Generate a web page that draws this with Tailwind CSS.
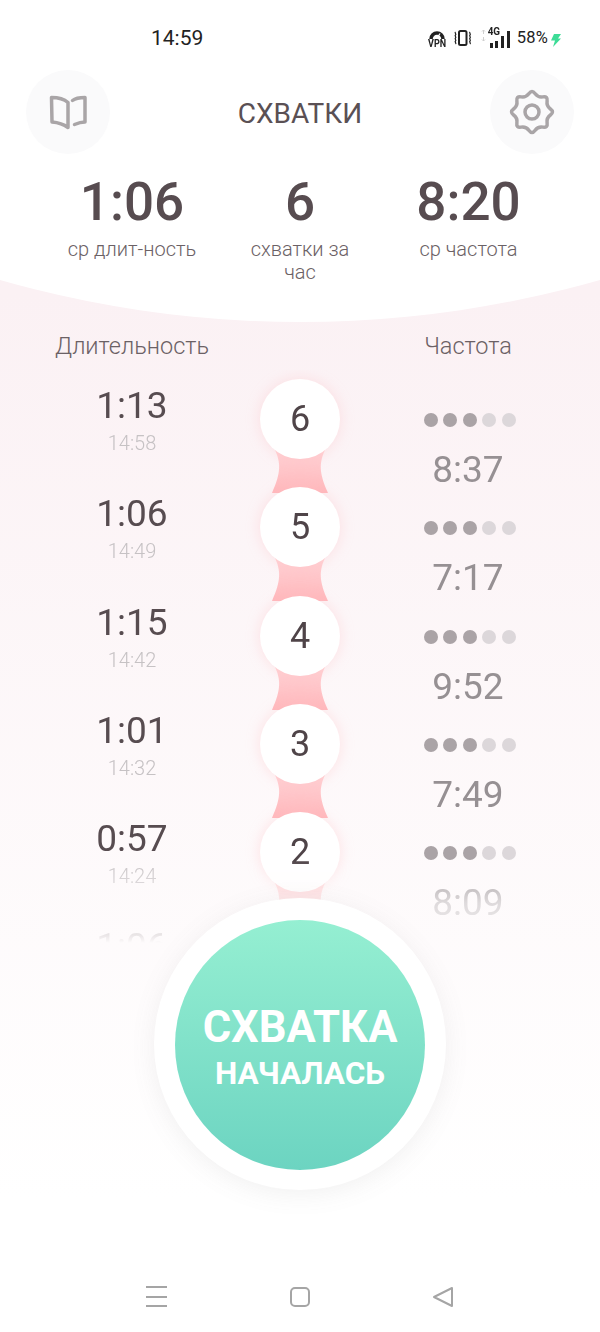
<!DOCTYPE html>
<html lang="ru">
<head>
<meta charset="utf-8">
<script src="https://cdn.jsdelivr.net/npm/@tailwindcss/browser@4"></script>
<title>Схватки</title>
</head>
<body class="m-0 bg-white">
<div class="relative w-[600px] h-[1332px] overflow-hidden font-['Roboto',sans-serif] text-[#574c50] bg-linear-to-b from-[#fbf1f4] from-[22%] to-white to-[90%]">
  <!-- curved white top -->
  <div class="absolute left-[-792px] top-[-1862px] w-[2184px] h-[2184px] rounded-full bg-white"></div>

  <div class="relative flex flex-col h-full">
    <!-- status bar -->
    <div class="h-[70px] flex items-start shrink-0 pt-[26px] pl-[151px] pr-[39px] justify-between">
      <span class="text-[21px] leading-[24px] text-[#222]">14:59</span>
      <div class="flex items-center h-[24px] text-[#222]">
        <div class="flex flex-col items-center w-[18px] mt-[2px]">
          <svg width="16" height="9" viewBox="0 0 16 9" fill="none"><path d="M2 9a6 6 0 0 1 12 0" stroke="#222" stroke-width="3.500"/><path d="M7.500 9 11 3.500" stroke="#fff" stroke-width="1.200"/></svg>
          <span class="text-[10px] leading-[9px] font-bold scale-x-90">VPN</span>
        </div>
        <svg class="ml-[7px]" width="19" height="16" viewBox="0 0 19 16" fill="none" stroke="#222"><rect x="6" y="1" width="7.500" height="14" rx="1.500" stroke-width="2"/><path d="M2.500 2c-1.200 1 1.200 2 0 3s1.200 2 0 3 1.200 2 0 3 1.200 2 0 3" stroke-width="1.300"/><path d="M17 2c-1.200 1 1.200 2 0 3s1.200 2 0 3 1.200 2 0 3 1.200 2 0 3" stroke-width="1.300"/></svg>
        <svg class="ml-[9px] -mt-[6px]" width="5" height="13" viewBox="0 0 5 13" fill="none" stroke="#cfcfcf" stroke-width="1"><path d="M2.500 5V1M1 2.500 2.500 1 4 2.500M2.500 8v4M1 10.500 2.500 12 4 10.500"/></svg>
        <div class="flex items-end gap-[2px] h-[20px] ml-[4px] relative">
          <span class="absolute left-[-3px] top-[-2px] text-[11px] leading-[11px] font-bold scale-x-90">4G</span>
          <i class="block w-[3px] h-[5px] bg-[#222]"></i><i class="block w-[3px] h-[7px] bg-[#222]"></i><i class="block w-[3px] h-[12px] bg-[#222] ml-[1px]"></i><i class="block w-[3px] h-[17px] bg-[#222] ml-[1px]"></i>
        </div>
        <div class="flex items-center ml-[7px]">
          <span class="text-[16.500px] leading-[20px] tracking-[0.2px]">58%</span>
          <svg class="ml-[2px] mt-[3px]" width="11" height="14" viewBox="0 0 11 14"><path d="M4 1h7L8 5.500h3L3 14l2-6.500H1z" fill="#3ddc97"/></svg>
        </div>
      </div>
    </div>

    <!-- header -->
    <div class="h-[84px] shrink-0 flex items-center justify-between pl-[26px] pr-[26px]">
      <div class="w-[84px] h-[84px] rounded-full bg-[#fafafb] flex items-center justify-center">
        <svg width="38" height="35" viewBox="0 0 38 35" fill="none" stroke="#a9a5a7" stroke-width="3.500" stroke-linejoin="round" stroke-linecap="round"><path d="M2.500 2.500C8 2.500 15 4 19 7.500V32.500C15 29.500 9 27.500 3 27Z"/><path d="M23.500 5.500C26 3.500 31 2.500 36 2.500V27C32 27 29 28 25.500 29.500"/></svg>
      </div>
      <h1 class="text-[28px] leading-[34px] font-normal text-[#5a5054] mt-[3px]">СХВАТКИ</h1>
      <div class="w-[84px] h-[84px] rounded-full bg-[#fafafb] flex items-center justify-center">
        <svg class="overflow-visible" width="44" height="44" viewBox="0 0 44 44" fill="none" stroke="#a9a5a7" stroke-width="3.500"><path d="M19.030 3.590Q22 -.5 24.970 3.590Q27.930 7.680 32.920 6.890Q37.900 6.100 37.110 11.090Q36.320 16.070 40.410 19.040Q44.500 22 40.410 24.970Q36.320 27.930 37.110 32.920Q37.900 37.900 32.920 37.110Q27.930 36.320 24.970 40.410Q22 44.500 19.030 40.410Q16.070 36.320 11.080 37.110Q6.100 37.900 6.890 32.920Q7.680 27.930 3.590 24.970Q-.5 22 3.590 19.030Q7.680 16.070 6.890 11.080Q6.100 6.100 11.080 6.890Q16.070 7.680 19.030 3.590Z"/><circle cx="22" cy="22" r="7"/></svg>
      </div>
    </div>

    <!-- stats -->
    <div class="h-[176px] shrink-0 pl-[32px] pr-[31px] pt-[18px] grid grid-cols-[200px_136px_201px] items-start text-center">
      <div>
        <div class="text-[53px] leading-[60px] font-medium">1:06</div>
        <div class="text-[20px] leading-[23px] font-light mt-[6px] text-[#6b6165]">ср длит-ность</div>
      </div>
      <div>
        <div class="text-[53px] leading-[60px] font-medium">6</div>
        <div class="text-[20px] leading-[23px] font-light mt-[6px] text-[#6b6165] w-[120px] mx-auto">схватки за час</div>
      </div>
      <div>
        <div class="text-[53px] leading-[60px] font-medium">8:20</div>
        <div class="text-[20px] leading-[23px] font-light mt-[6px] text-[#6b6165]">ср частота</div>
      </div>
    </div>

    <!-- column headers -->
    <div class="h-[40px] shrink-0 flex text-[23.500px] font-light text-[#6b6165] leading-[32px]">
      <div class="w-[264px] text-center">Длительность</div>
      <div class="w-[72px]"></div>
      <div class="w-[264px] text-center">Частота</div>
    </div>

    <!-- list -->
    <div class="h-[580px] shrink-0 overflow-hidden [mask-image:linear-gradient(to_bottom,black_0,black_490px,rgba(0,0,0,.3)_533px,rgba(0,0,0,.12)_565px,transparent_573px)]">
      <div class="h-[108.300px] flex">
        <div class="w-[264px] text-center">
          <div class="text-[37px] leading-[40px] font-normal mt-[16px]">1:13</div>
          <div class="text-[20px] leading-[24px] font-light text-[#c6c2c4] mt-[5px]">14:58</div>
        </div>
        <div class="w-[72px] relative flex justify-center">
          <svg class="absolute left-[4px] top-[75px]" width="64" height="60" viewBox="0 0 64 60"><defs><linearGradient id="p" x1="0" y1="0" x2="0" y2="1"><stop offset="0" stop-color="#ffd2d5"/><stop offset="1" stop-color="#ffb7bb"/></linearGradient></defs><path d="M7 5C13 18 13 28 4 48L60 48C51 28 51 18 57 5Z" fill="url(#p)"/></svg>
          <div class="relative shrink-0 w-[80px] h-[80px] mt-[9px] rounded-full bg-white shadow-[0_0_14px_rgba(255,190,195,0.4)] flex items-center justify-center text-[36px] font-normal text-[#4f4448]">6</div>
        </div>
        <div class="w-[264px] flex flex-col items-center">
          <div class="flex gap-[5.500px] mt-[43px] ml-[3px]"><i class="block w-[14px] h-[14px] rounded-full bg-[#aaa3a6]"></i><i class="block w-[14px] h-[14px] rounded-full bg-[#aaa3a6]"></i><i class="block w-[14px] h-[14px] rounded-full bg-[#aaa3a6]"></i><i class="block w-[14px] h-[14px] rounded-full bg-[#dcd7da]"></i><i class="block w-[14px] h-[14px] rounded-full bg-[#dcd7da]"></i></div>
          <div class="text-[37px] leading-[40px] font-normal text-[#969093] mt-[23px]">8:37</div>
        </div>
      </div>
      <div class="h-[108.300px] flex">
        <div class="w-[264px] text-center">
          <div class="text-[37px] leading-[40px] font-normal mt-[16px]">1:06</div>
          <div class="text-[20px] leading-[24px] font-light text-[#c6c2c4] mt-[5px]">14:49</div>
        </div>
        <div class="w-[72px] relative flex justify-center">
          <svg class="absolute left-[4px] top-[75px]" width="64" height="60" viewBox="0 0 64 60"><path d="M7 5C13 18 13 28 4 48L60 48C51 28 51 18 57 5Z" fill="url(#p)"/></svg>
          <div class="relative shrink-0 w-[80px] h-[80px] mt-[9px] rounded-full bg-white shadow-[0_0_14px_rgba(255,190,195,0.4)] flex items-center justify-center text-[36px] font-normal text-[#4f4448]">5</div>
        </div>
        <div class="w-[264px] flex flex-col items-center">
          <div class="flex gap-[5.500px] mt-[43px] ml-[3px]"><i class="block w-[14px] h-[14px] rounded-full bg-[#aaa3a6]"></i><i class="block w-[14px] h-[14px] rounded-full bg-[#aaa3a6]"></i><i class="block w-[14px] h-[14px] rounded-full bg-[#aaa3a6]"></i><i class="block w-[14px] h-[14px] rounded-full bg-[#dcd7da]"></i><i class="block w-[14px] h-[14px] rounded-full bg-[#dcd7da]"></i></div>
          <div class="text-[37px] leading-[40px] font-normal text-[#969093] mt-[23px]">7:17</div>
        </div>
      </div>
      <div class="h-[108.300px] flex">
        <div class="w-[264px] text-center">
          <div class="text-[37px] leading-[40px] font-normal mt-[16px]">1:15</div>
          <div class="text-[20px] leading-[24px] font-light text-[#c6c2c4] mt-[5px]">14:42</div>
        </div>
        <div class="w-[72px] relative flex justify-center">
          <svg class="absolute left-[4px] top-[75px]" width="64" height="60" viewBox="0 0 64 60"><path d="M7 5C13 18 13 28 4 48L60 48C51 28 51 18 57 5Z" fill="url(#p)"/></svg>
          <div class="relative shrink-0 w-[80px] h-[80px] mt-[9px] rounded-full bg-white shadow-[0_0_14px_rgba(255,190,195,0.4)] flex items-center justify-center text-[36px] font-normal text-[#4f4448]">4</div>
        </div>
        <div class="w-[264px] flex flex-col items-center">
          <div class="flex gap-[5.500px] mt-[43px] ml-[3px]"><i class="block w-[14px] h-[14px] rounded-full bg-[#aaa3a6]"></i><i class="block w-[14px] h-[14px] rounded-full bg-[#aaa3a6]"></i><i class="block w-[14px] h-[14px] rounded-full bg-[#aaa3a6]"></i><i class="block w-[14px] h-[14px] rounded-full bg-[#dcd7da]"></i><i class="block w-[14px] h-[14px] rounded-full bg-[#dcd7da]"></i></div>
          <div class="text-[37px] leading-[40px] font-normal text-[#969093] mt-[23px]">9:52</div>
        </div>
      </div>
      <div class="h-[108.300px] flex">
        <div class="w-[264px] text-center">
          <div class="text-[37px] leading-[40px] font-normal mt-[16px]">1:01</div>
          <div class="text-[20px] leading-[24px] font-light text-[#c6c2c4] mt-[5px]">14:32</div>
        </div>
        <div class="w-[72px] relative flex justify-center">
          <svg class="absolute left-[4px] top-[75px]" width="64" height="60" viewBox="0 0 64 60"><path d="M7 5C13 18 13 28 4 48L60 48C51 28 51 18 57 5Z" fill="url(#p)"/></svg>
          <div class="relative shrink-0 w-[80px] h-[80px] mt-[9px] rounded-full bg-white shadow-[0_0_14px_rgba(255,190,195,0.4)] flex items-center justify-center text-[36px] font-normal text-[#4f4448]">3</div>
        </div>
        <div class="w-[264px] flex flex-col items-center">
          <div class="flex gap-[5.500px] mt-[43px] ml-[3px]"><i class="block w-[14px] h-[14px] rounded-full bg-[#aaa3a6]"></i><i class="block w-[14px] h-[14px] rounded-full bg-[#aaa3a6]"></i><i class="block w-[14px] h-[14px] rounded-full bg-[#aaa3a6]"></i><i class="block w-[14px] h-[14px] rounded-full bg-[#dcd7da]"></i><i class="block w-[14px] h-[14px] rounded-full bg-[#dcd7da]"></i></div>
          <div class="text-[37px] leading-[40px] font-normal text-[#969093] mt-[23px]">7:49</div>
        </div>
      </div>
      <div class="h-[108.300px] flex">
        <div class="w-[264px] text-center">
          <div class="text-[37px] leading-[40px] font-normal mt-[16px]">0:57</div>
          <div class="text-[20px] leading-[24px] font-light text-[#c6c2c4] mt-[5px]">14:24</div>
        </div>
        <div class="w-[72px] relative flex justify-center">
          <svg class="absolute left-[4px] top-[75px]" width="64" height="60" viewBox="0 0 64 60"><path d="M7 5C13 18 13 28 4 48L60 48C51 28 51 18 57 5Z" fill="url(#p)"/></svg>
          <div class="relative shrink-0 w-[80px] h-[80px] mt-[9px] rounded-full bg-white shadow-[0_0_14px_rgba(255,190,195,0.4)] flex items-center justify-center text-[36px] font-normal text-[#4f4448]">2</div>
        </div>
        <div class="w-[264px] flex flex-col items-center">
          <div class="flex gap-[5.500px] mt-[43px] ml-[3px]"><i class="block w-[14px] h-[14px] rounded-full bg-[#aaa3a6]"></i><i class="block w-[14px] h-[14px] rounded-full bg-[#aaa3a6]"></i><i class="block w-[14px] h-[14px] rounded-full bg-[#aaa3a6]"></i><i class="block w-[14px] h-[14px] rounded-full bg-[#dcd7da]"></i><i class="block w-[14px] h-[14px] rounded-full bg-[#dcd7da]"></i></div>
          <div class="text-[37px] leading-[40px] font-normal text-[#969093] mt-[23px]">8:09</div>
        </div>
      </div>
      <div class="h-[108.300px] flex">
        <div class="w-[264px] text-center">
          <div class="text-[37px] leading-[40px] font-normal mt-[16px]">1:06</div>
        </div>
      </div>
    </div>

    <!-- nav bar -->
    <div class="mt-auto h-[70px] shrink-0 relative">
      <div class="absolute left-[146px] top-[24px] flex flex-col gap-[7.500px] w-[21px]">
        <i class="block h-[2px] bg-[#a5a5a5]"></i><i class="block h-[2px] bg-[#a5a5a5]"></i><i class="block h-[2px] bg-[#a5a5a5]"></i>
      </div>
      <div class="absolute left-[290px] top-[25px] w-[20px] h-[20px] rounded-[5px] border-2 border-[#a5a5a5]"></div>
      <svg class="absolute left-[432px] top-[24px]" width="22" height="22" viewBox="0 0 22 22" fill="none" stroke="#a5a5a5" stroke-width="2" stroke-linejoin="round"><path d="M20 2v18L2 11z"/></svg>
    </div>
  </div>

  <!-- main button -->
  <div class="absolute left-[154px] top-[898px] w-[292px] h-[292px] rounded-full bg-white shadow-[0_4px_24px_rgba(120,120,120,0.1)] flex items-center justify-center">
    <button class="w-[250px] h-[250px] mt-[2px] rounded-full bg-linear-to-b from-[#95efd2] to-[#6cd4c1] text-white font-bold flex flex-col items-center justify-center pt-[8px]">
      <span class="text-[43.500px] leading-[48px]">СХВАТКА</span>
      <span class="text-[31.500px] leading-[43px]">НАЧАЛАСЬ</span>
    </button>
  </div>
</div>
</body>
</html>
